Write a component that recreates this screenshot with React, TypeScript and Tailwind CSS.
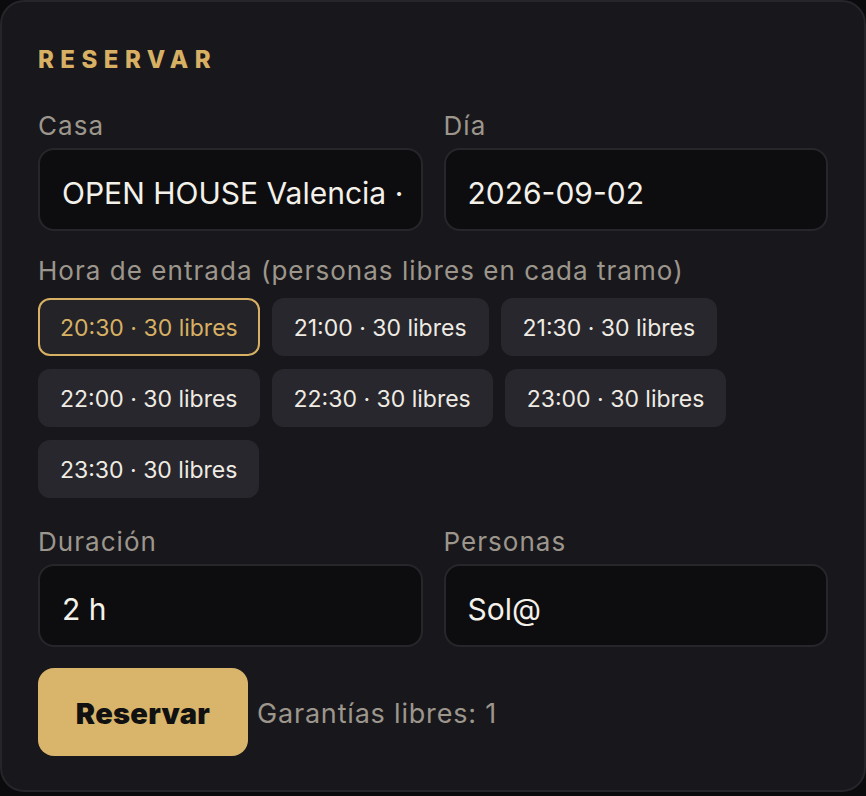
import { useState } from "react";

const slots = ["20:30", "21:00", "21:30", "22:00", "22:30", "23:00", "23:30"];

function Field({ label, value }: { label: string; value: string }) {
  return (
    <div className="flex flex-col min-w-0">
      <span className="text-[26px] leading-[32px] tracking-[0.04em] text-[#9d968c] mb-[6px]">{label}</span>
      <div className="h-[83px] rounded-[16px] bg-[#0d0d0f] border-2 border-[#26262b] flex items-center px-[22px] pt-[8px] overflow-hidden">
        <span className="text-[30px] text-[#f4f1ea] whitespace-nowrap">{value}</span>
      </div>
    </div>
  );
}

export default function App() {
  const [selected, setSelected] = useState("20:30");

  return (
    <div className="min-h-[796px] bg-[#0b0b0d]" style={{ fontFamily: "Inter, 'Noto Sans', sans-serif" }}>
      <div className="rounded-[24px] border-2 border-[#25252a] bg-[#18181c] px-[36px] pt-[42px] pb-[34px]">
        <h2 className="text-[24px] leading-[32px] font-extrabold tracking-[0.27em] text-[#d8b064]">RESERVAR</h2>

        <div className="grid grid-cols-2 gap-x-[21px] mt-[34px]">
          <Field label="Casa" value="OPEN HOUSE Valencia ·" />
          <Field label="Día" value="2026-09-02" />
        </div>

        <div className="mt-[24px] text-[26px] leading-[32px] tracking-[0.04em] text-[#9d968c] whitespace-nowrap">
          Hora de entrada (personas libres en cada tramo)
        </div>
        <div className="flex flex-wrap gap-x-[12px] gap-y-[13px] mt-[11px]">
          {slots.map((s) => {
            const active = s === selected;
            return (
              <button
                key={s}
                onClick={() => setSelected(s)}
                className={`h-[58px] px-[20px] pt-[2px] rounded-[12px] text-[23px] whitespace-nowrap ${
                  active
                    ? "border-2 border-[#d8b064] bg-[#232328] text-[#d8b064]"
                    : "border-2 border-[#27272d] bg-[#27272d] text-[#efebe3]"
                }`}
              >
                {s} · 30 libres
              </button>
            );
          })}
        </div>

        <div className="grid grid-cols-2 gap-x-[21px] mt-[28px]">
          <Field label="Duración" value="2 h" />
          <Field label="Personas" value="Sol@" />
        </div>

        <div className="flex items-center gap-[9px] mt-[21px]">
          <button className="h-[88px] w-[210px] rounded-[16px] bg-[#d9b56b] text-[#111111] text-[29px] font-black tracking-[0.01em] pt-[4px]">
            Reservar
          </button>
          <span className="text-[27px] tracking-[0.03em] text-[#9d968c] pt-[4px]">Garantías libres: 1</span>
        </div>
      </div>
    </div>
  );
}
